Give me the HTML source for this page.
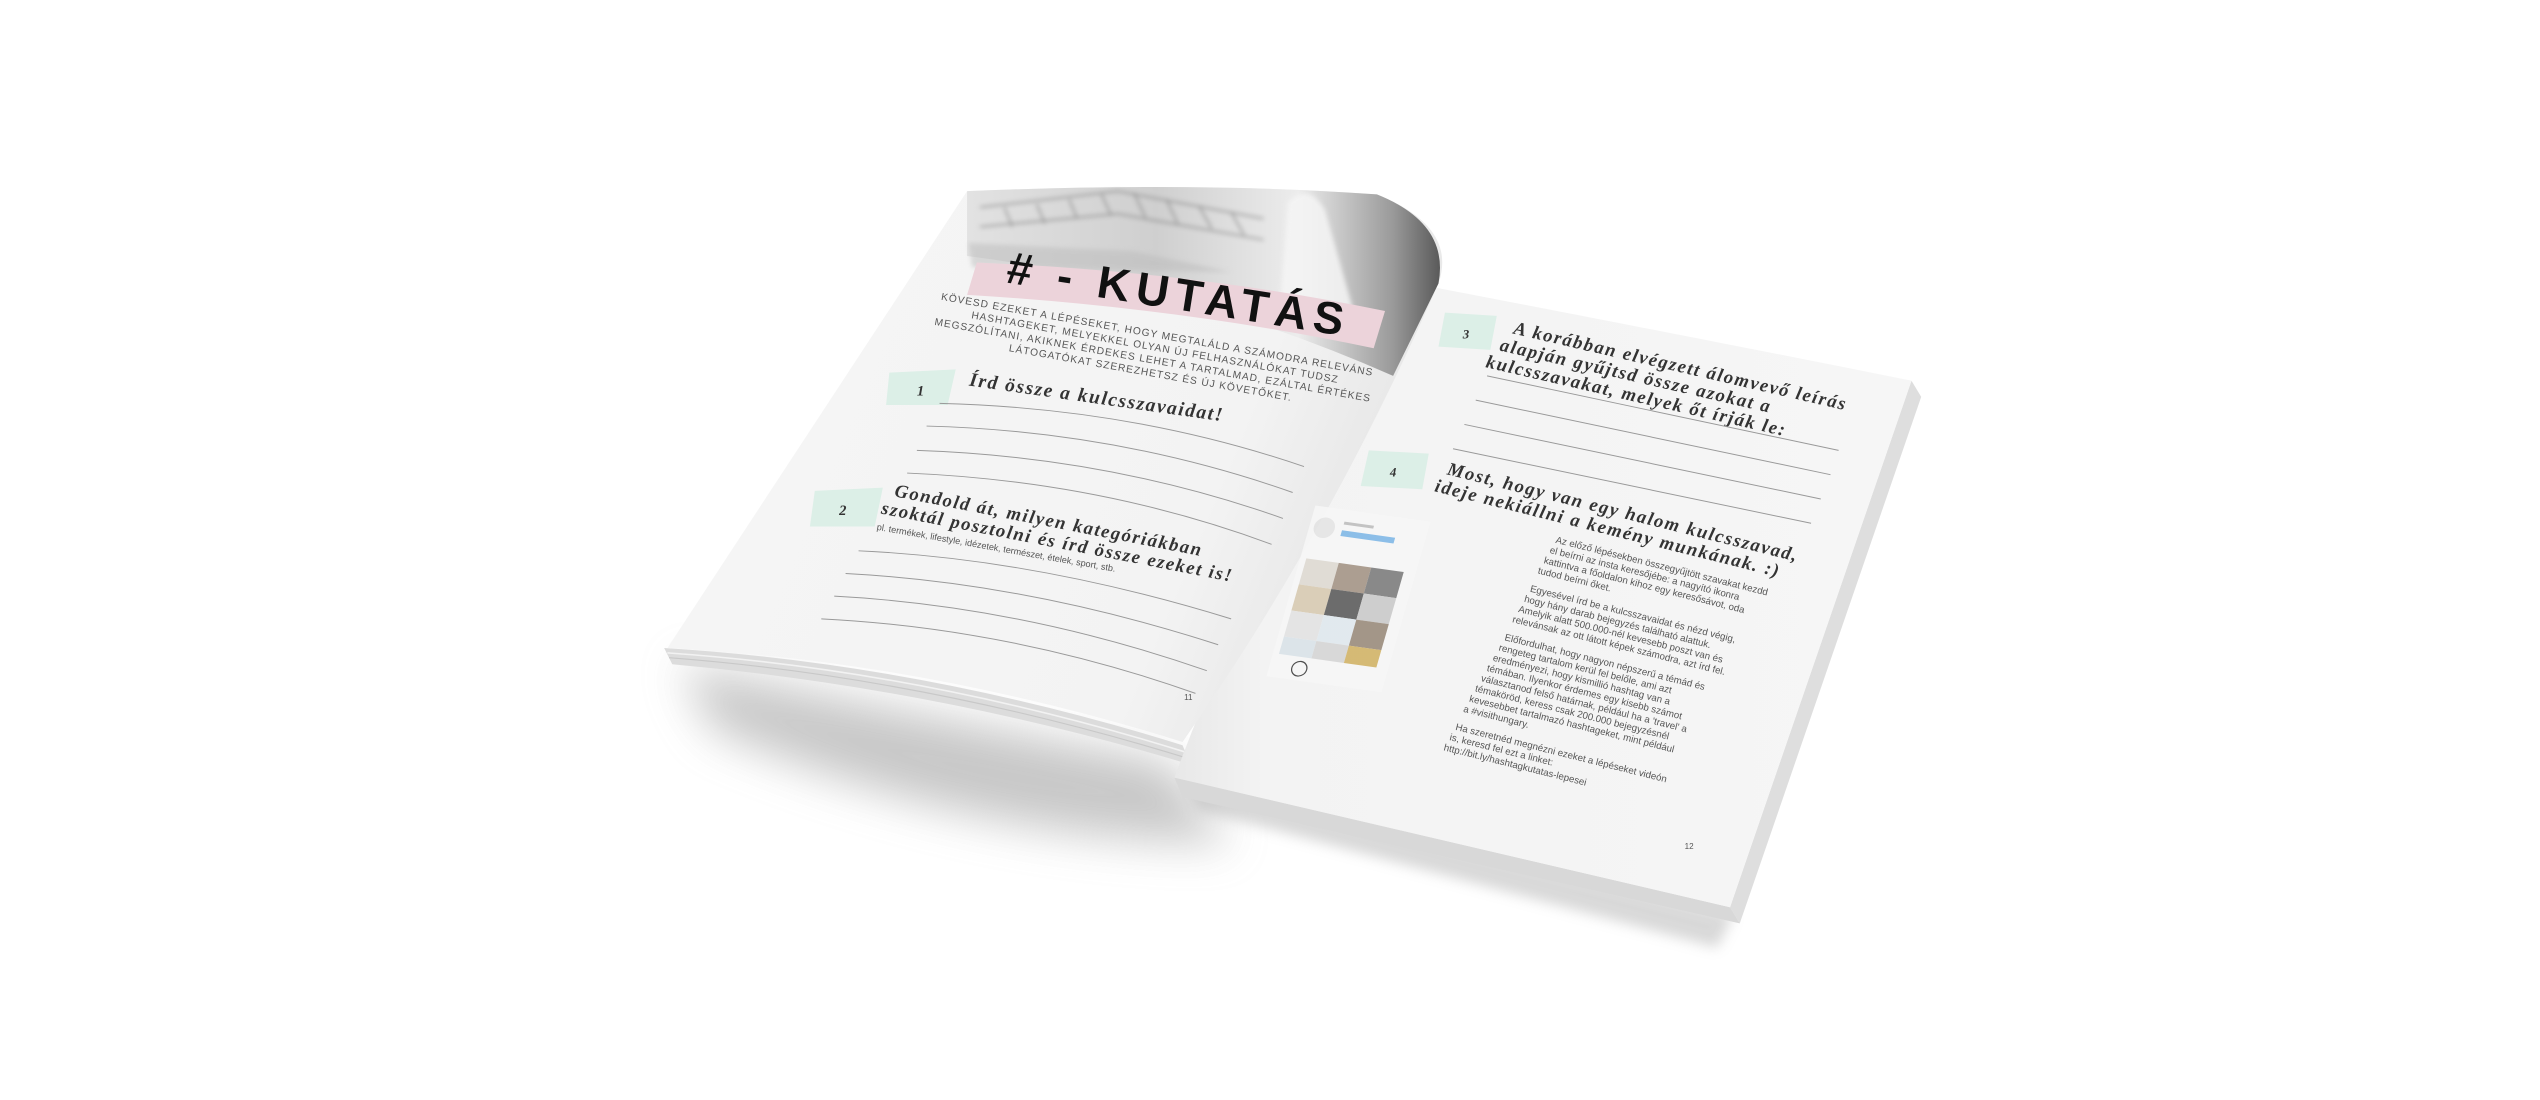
<!DOCTYPE html>
<html><head><meta charset="utf-8"><style>
html,body{margin:0;padding:0;background:#fff;width:2540px;height:1100px;overflow:hidden}
svg{display:block}
.s{font-family:"Liberation Serif",serif;font-style:italic;font-weight:bold;fill:#333;letter-spacing:1px}
.n{font-family:"Liberation Sans",sans-serif;fill:#555}
.k{font-family:"Liberation Sans",sans-serif;font-weight:bold;fill:#111}
</style></head><body>
<svg width="2540" height="1100" viewBox="0 0 1568 679" preserveAspectRatio="none" xmlns="http://www.w3.org/2000/svg">
<defs>
<filter id="bl" x="-30%" y="-30%" width="160%" height="160%"><feGaussianBlur stdDeviation="14"/></filter>
<filter id="bl2"><feGaussianBlur stdDeviation="4"/></filter>
<filter id="bl3"><feGaussianBlur stdDeviation="1.5"/></filter>
<linearGradient id="lp" x1="0" y1="0" x2="1" y2="0.3">
<stop offset="0" stop-color="#f6f6f6"/><stop offset="0.8" stop-color="#f3f3f3"/><stop offset="1" stop-color="#e6e6e6"/></linearGradient>
<linearGradient id="rp" x1="0" y1="0" x2="1" y2="0">
<stop offset="0" stop-color="#e8e8e8"/><stop offset="0.12" stop-color="#f3f3f3"/><stop offset="1" stop-color="#f6f6f6"/></linearGradient>
<linearGradient id="ph" x1="0" y1="0" x2="1" y2="0">
<stop offset="0" stop-color="#e2e2e2"/><stop offset="0.4" stop-color="#cfcfcf"/><stop offset="0.7" stop-color="#ececec"/><stop offset="0.9" stop-color="#9a9a9a"/><stop offset="1" stop-color="#5a5a5a"/></linearGradient>
</defs>
<path d="M420 410 Q560 440 720 470 L760 520 Q600 520 440 450 Z" fill="#9a9a9a" opacity="0.55" filter="url(#bl)"/>
<path d="M730 480 L1070 565 L1060 585 L740 500 Z" fill="#aaa" opacity="0.45" filter="url(#bl2)"/>
<path d="M410 400 Q570 410 730 460 L735 472 Q580 425 415 410 Z" fill="#dcdcdc"/>
<path d="M412 403 Q570 414 731 464" stroke="#f2f2f2" fill="none" stroke-width="1"/>
<path d="M413 406 Q570 418 733 468" stroke="#c8c8c8" fill="none" stroke-width="0.7"/>
<path d="M1180 235 L1186 245 L1074 570 L1068 560 Z" fill="#dedede"/>
<path d="M725 480 L1068 560 L1074 570 L730 492 Z" fill="#d8d8d8"/>
<path d="M878 176 Q1030 205 1180 235 L1068 560 L725 480 Q780 330 878 176 Z" fill="url(#rp)"/>
<path d="M597 118 Q740 112 850 120 Q900 140 888 175 Q820 330 730 458 Q570 408 412 400 Z" fill="url(#lp)"/>
<path d="M597 118 Q740 112 850 120 Q895 138 888 175 L860 232 Q730 175 597 158 Z" fill="url(#ph)"/>
<g stroke="#777" stroke-width="1" fill="none" opacity="0.7" filter="url(#bl3)">
<path d="M605 128 L690 118 L780 135"/>
<path d="M605 140 L690 132 L780 148"/>
<path d="M620 128 L625 140 M640 126 L645 138 M660 123 L665 135 M680 120 L686 133 M700 119 L707 134 M720 123 L727 138 M740 127 L748 141 M760 131 L768 145"/>
</g>
<path d="M598 150 L700 155 L760 168 L600 165 Z" fill="#bbb" opacity="0.5" filter="url(#bl3)"/>
<path d="M795 125 Q808 112 818 130 L835 190 L790 190 Z" fill="#f5f5f5" opacity="0.85" filter="url(#bl3)"/>
<path d="M603 162 Q740 168 855 192 L848 215 Q730 190 597 182 Z" fill="#ecd3da"/>
<text class="k" x="620" y="190" font-size="28" letter-spacing="4" transform="rotate(9 720 185)">#  - KUTATÁS</text>
<g class="n" font-size="6.3" letter-spacing="0.6" text-anchor="middle" transform="rotate(10 710 220)" fill="#444">
<text x="712" y="208">KÖVESD EZEKET A LÉPÉSEKET, HOGY MEGTALÁLD A SZÁMODRA RELEVÁNS</text>
<text x="712" y="216">HASHTAGEKET, MELYEKKEL OLYAN ÚJ FELHASZNÁLÓKAT TUDSZ</text>
<text x="712" y="224">MEGSZÓLÍTANI, AKIKNEK ÉRDEKES LEHET A TARTALMAD, EZÁLTAL ÉRTÉKES</text>
<text x="712" y="232">LÁTOGATÓKAT SZEREZHETSZ ÉS ÚJ KÖVETŐKET.</text>
</g>
<path d="M549 230 L590 228 L585 250 L547 250 Z" fill="#dcefe7"/>
<text class="s" x="566" y="244" font-size="9">1</text>
<text class="s" x="598" y="238" font-size="12" transform="rotate(8 598 238)">Írd össze a kulcsszavaidat!</text>
<g stroke="#999" stroke-width="0.6" fill="none">
<path d="M580 249 Q700 252 805 288"/>
<path d="M572 263 Q690 266 798 304"/>
<path d="M566 278 Q685 282 792 320"/>
<path d="M560 292 Q680 297 785 336"/>
<path d="M530 340 Q640 345 760 382"/>
<path d="M522 354 Q635 360 752 398"/>
<path d="M515 368 Q630 374 745 414"/>
<path d="M507 382 Q625 388 738 428"/>
</g>
<path d="M503 303 L545 301 L540 325 L500 325 Z" fill="#dcefe7"/>
<text class="s" x="518" y="318" font-size="9">2</text>
<g class="s" font-size="11.5" transform="rotate(11 550 305)">
<text x="552" y="306">Gondold át, milyen kategóriákban</text>
<text x="546" y="318">szoktál posztolni és írd össze ezeket is!</text>
</g>
<text class="n" x="541" y="327" font-size="5.6" transform="rotate(10 541 327)">pl. termékek, lifestyle, idézetek, természet, ételek, sport, stb.</text>
<text class="n" x="731" y="432" font-size="5">11</text>
<path d="M892 193 L924 195 L920 216 L888 214 Z" fill="#dcefe7"/>
<text class="s" x="903" y="209" font-size="8">3</text>
<g class="s" font-size="11.5" transform="rotate(13 930 205)">
<text x="934" y="205">A korábban elvégzett álomvevő leírás</text>
<text x="928" y="217">alapján gyűjtsd össze azokat a</text>
<text x="922" y="229">kulcsszavakat, melyek őt írják le:</text>
</g>
<g stroke="#999" stroke-width="0.6" fill="none">
<line x1="918" y1="232" x2="1135" y2="278"/>
<line x1="911" y1="247" x2="1130" y2="293"/>
<line x1="904" y1="262" x2="1124" y2="308"/>
<line x1="897" y1="277" x2="1118" y2="323"/>
</g>
<path d="M845 278 L882 280 L878 302 L840 300 Z" fill="#dcefe7"/>
<text class="s" x="858" y="294" font-size="8">4</text>
<g class="s" font-size="11.5" transform="rotate(14 890 292)">
<text x="893" y="292">Most, hogy van egy halom kulcsszavad,</text>
<text x="888" y="304">ideje nekiállni a kemény munkának. :)</text>
</g>
<g transform="translate(812,312) rotate(8) skewX(-8) scale(0.92)" opacity="0.85">
<rect x="0" y="0" width="78" height="118" fill="#f7f7f7"/>
<circle cx="10" cy="14" r="7" fill="#e4e4e4"/>
<rect x="22" y="14" width="36" height="4" fill="#7ab5e6"/>
<rect x="22" y="8" width="20" height="2" fill="#bbb"/>
<rect x="4" y="36" width="22" height="18" fill="#ddd8d0"/><rect x="26" y="36" width="22" height="18" fill="#a09080"/><rect x="48" y="36" width="22" height="18" fill="#777"/>
<rect x="4" y="54" width="22" height="18" fill="#d6c8ae"/><rect x="26" y="54" width="22" height="18" fill="#555"/><rect x="48" y="54" width="22" height="18" fill="#c8c8c8"/>
<rect x="4" y="72" width="22" height="18" fill="#e2e2e2"/><rect x="26" y="72" width="22" height="18" fill="#dfe8ee"/><rect x="48" y="72" width="22" height="18" fill="#968676"/>
<rect x="4" y="90" width="22" height="12" fill="#d8e2e8"/><rect x="26" y="90" width="22" height="12" fill="#d4d4d4"/><rect x="48" y="90" width="22" height="12" fill="#d0b060"/>
<circle cx="20" cy="110" r="5" fill="none" stroke="#333" stroke-width="0.8"/>
</g>
<g class="n" font-size="6" transform="rotate(14 960 335)" fill="#555">
<text x="960" y="335">Az előző lépésekben összegyűjtött szavakat kezdd</text>
<text x="958" y="342">el beírni az insta keresőjébe: a nagyító ikonra</text>
<text x="956" y="349">kattintva a főoldalon kihoz egy keresősávot, oda</text>
<text x="954" y="356">tudod beírni őket.</text>
<text x="952" y="368">Egyesével írd be a kulcsszavaidat és nézd végig,</text>
<text x="950" y="375">hogy hány darab bejegyzés található alattuk.</text>
<text x="948" y="382">Amelyik alatt 500.000-nél kevesebb poszt van és</text>
<text x="946" y="389">relevánsak az ott látott képek számodra, azt írd fel.</text>
<text x="944" y="401">Előfordulhat, hogy nagyon népszerű a témád és</text>
<text x="942" y="408">rengeteg tartalom kerül fel belőle, ami azt</text>
<text x="940" y="415">eredményezi, hogy kismillió hashtag van a</text>
<text x="938" y="422">témában. Ilyenkor érdemes egy kisebb számot</text>
<text x="936" y="429">választanod felső határnak, például ha a 'travel' a</text>
<text x="934" y="436">témaköröd, keress csak 200.000 bejegyzésnél</text>
<text x="932" y="443">kevesebbet tartalmazó hashtageket, mint például</text>
<text x="930" y="450">a #visithungary.</text>
<text x="928" y="462">Ha szeretnéd megnézni ezeket a lépéseket videón</text>
<text x="926" y="469">is, keresd fel ezt a linket:</text>
<text x="924" y="476">http://bit.ly/hashtagkutatas-lepesei</text>
</g>
<text class="n" x="1040" y="524" font-size="5">12</text>
</svg>
</body></html>
